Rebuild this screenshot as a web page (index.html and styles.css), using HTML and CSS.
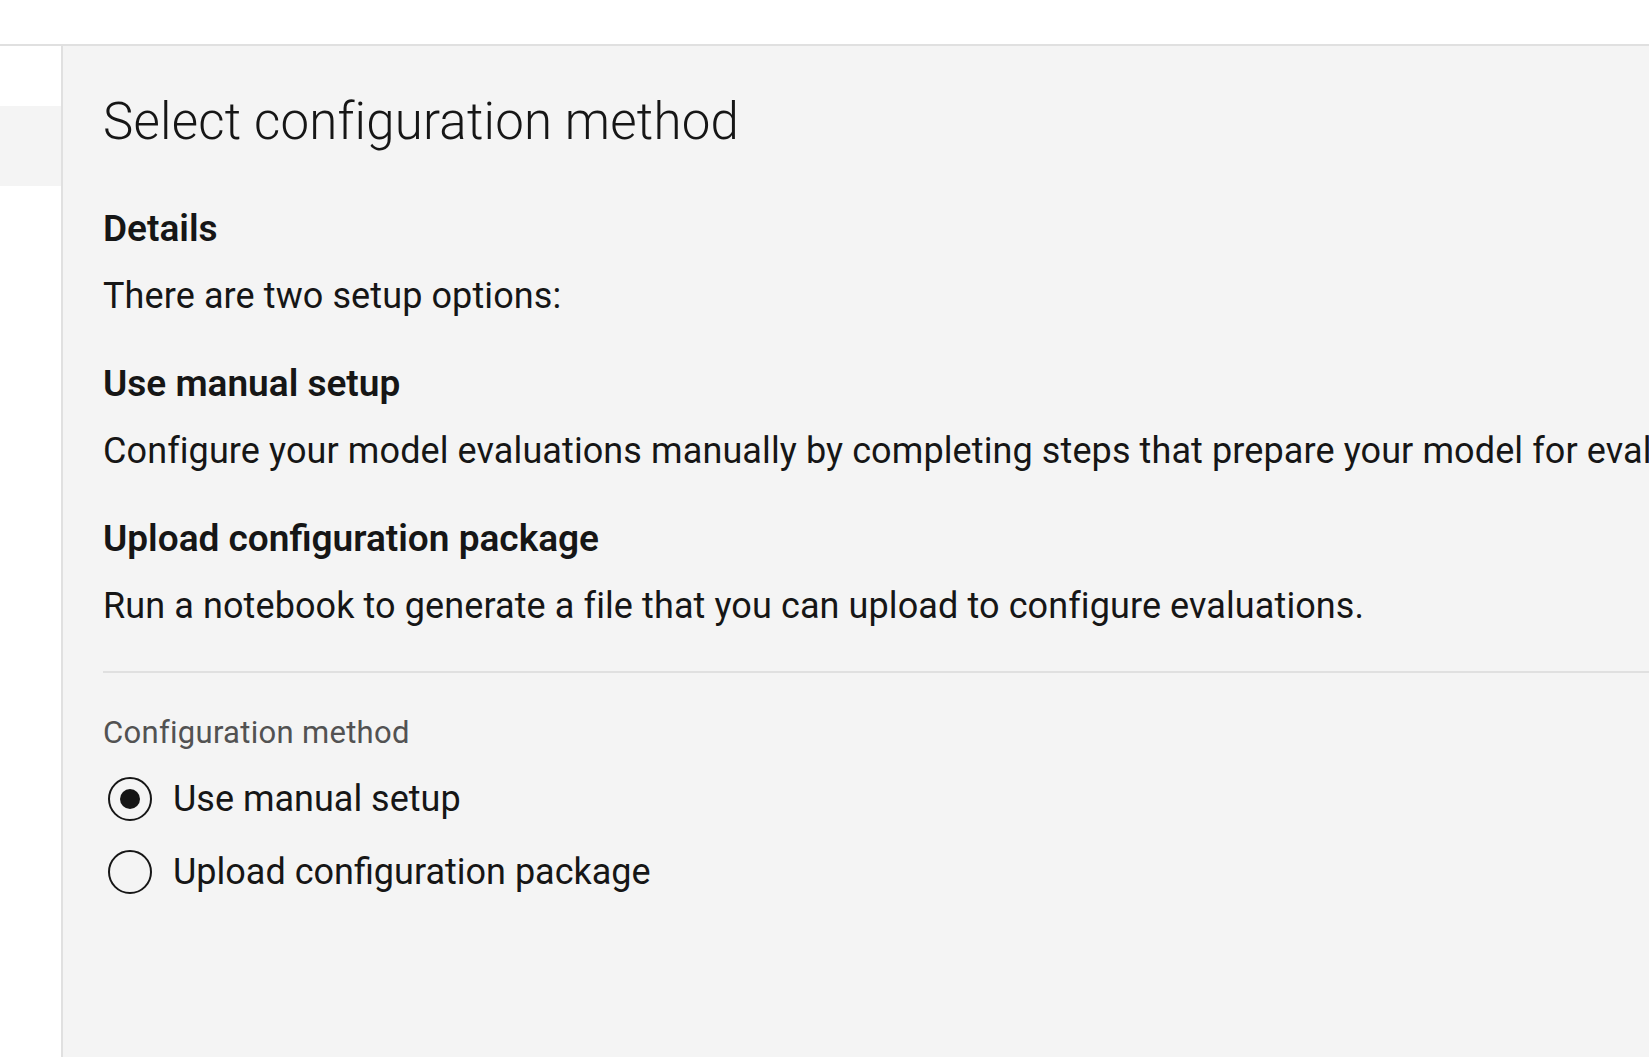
FILE: index.html
```html
<!DOCTYPE html>
<html lang="en">
<head>
  <meta charset="UTF-8" />
  <meta name="viewport" content="width=device-width, initial-scale=1.0"/>
  <title>Select configuration method</title>
  <link rel="stylesheet" href="styles.css">
</head>

<body>
  <header class="topbar"></header>

  <div class="layout">
    <aside class="sidenav">
      <div class="sidenav-item active"></div>
    </aside>

    <main class="panel">
      <h1 class="panel-title">Select configuration method</h1>

      <section class="details">
        <h2>Details</h2>
        <p>There are two setup options:</p>
        <h3>Use manual setup</h3>
        <p>Configure your model evaluations manually by completing steps that prepare your model for evaluations.</p>
        <h3>Upload configuration package</h3>
        <p>Run a notebook to generate a file that you can upload to configure evaluations.</p>
      </section>

      <hr class="divider">

      <fieldset class="radio-group">
        <legend>Configuration method</legend>
        <label class="radio">
          <input type="radio" name="method" value="manual" checked>
          <span class="radio-mark"></span>
          <span class="radio-text">Use manual setup</span>
        </label>
        <label class="radio">
          <input type="radio" name="method" value="upload">
          <span class="radio-mark"></span>
          <span class="radio-text">Upload configuration package</span>
        </label>
      </fieldset>
    </main>
  </div>
</body>
</html>
```

FILE: styles.css
```css
body {
  margin: 0;
  background: white;
  color: #161616;
  font-family: Roboto, 'Noto Sans', sans-serif;
  overflow: hidden;
}

/* top bar */
.topbar {
  height: 44px;
  background: white;
  border-bottom: 2px solid #e0e0e0;
}

.layout {
  display: flex;
  height: calc(100vh - 46px);
}

/* left side navigation */
.sidenav {
  width: 61px;
  flex-shrink: 0;
  background: white;
  border-right: 2px solid #e0e0e0;
  padding-top: 60px;
}

.sidenav-item {
  height: 80px;
}

.sidenav-item.active {
  background: #f4f4f4;
}

/* main panel */
.panel {
  flex: 1;
  min-width: 0;
  background: #f4f4f4;
  padding: 44px 0 0 40px;
  overflow: hidden;
}

.panel-title {
  margin: 0;
  font-size: 51px;
  line-height: 64px;
  font-weight: 300;
  letter-spacing: 0.2px;
}

.details {
  margin-top: 48px;
}

.details h2,
.details h3 {
  margin: 0;
  font-size: 37px;
  line-height: 54px;
  font-weight: 600;
}

.details p {
  margin: 13px 0 34px;
  font-size: 36px;
  line-height: 54px;
  letter-spacing: 0.1px;
  white-space: nowrap;
}

.details p:last-child {
  margin-bottom: 0;
}

.divider {
  margin: 38px 0 0;
  border: none;
  border-top: 2px solid #e0e0e0;
}

/* radio group */
.radio-group {
  margin: 0;
  padding: 0;
  border: none;
  display: flex;
  flex-direction: column;
  gap: 19px;
}

.radio-group legend {
  padding: 0;
  margin: 40px 0 0;
  font-size: 31px;
  line-height: 40px;
  color: #525252;
  letter-spacing: 0.3px;
  float: left;
}

.radio {
  display: flex;
  align-items: center;
  gap: 21px;
  height: 54px;
  padding-left: 5px;
  cursor: pointer;
  clear: left;
}

.radio input {
  display: none;
}

.radio-mark {
  width: 40px;
  height: 40px;
  border: 2px solid #161616;
  border-radius: 50%;
  display: flex;
  align-items: center;
  justify-content: center;
  flex-shrink: 0;
}

.radio input:checked + .radio-mark::after {
  content: "";
  width: 20px;
  height: 20px;
  border-radius: 50%;
  background: #161616;
}

.radio-text {
  font-size: 36px;
  line-height: 54px;
}
```
